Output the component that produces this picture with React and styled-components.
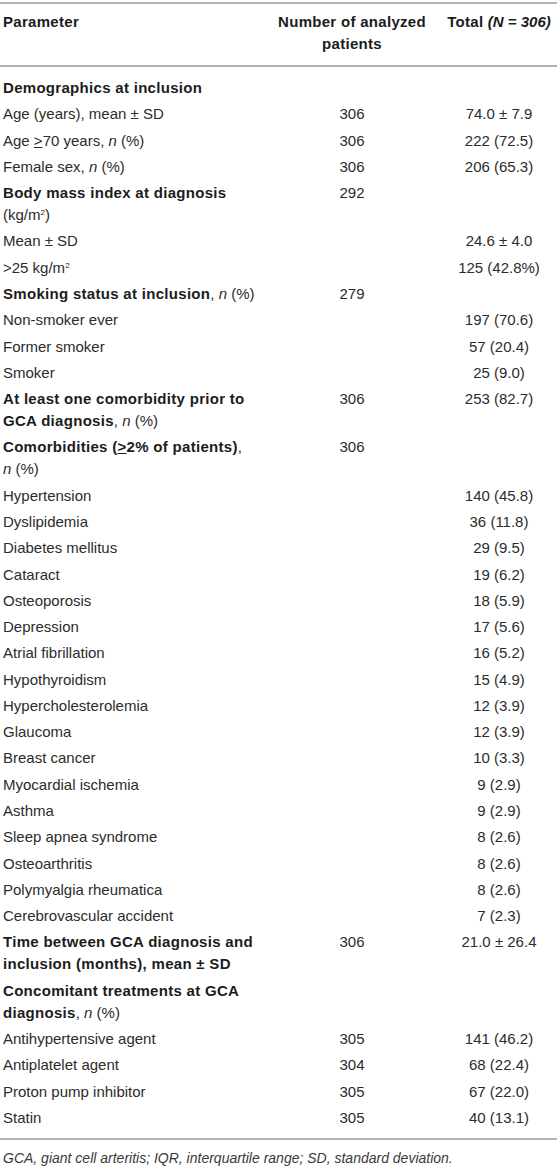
import styled, { createGlobalStyle } from 'styled-components'

const Global = createGlobalStyle`
  body {
    margin: 0;
    background: #fff;
    font-family: "Liberation Sans", Arial, sans-serif;
    color: #2c2c2c;
  }
`

const Page = styled.div`
  width: 557px;
  padding-top: 2px;
`

const Table = styled.table`
  width: 557px;
  border-collapse: collapse;
  table-layout: fixed;
  font-size: 15px;
  line-height: 22px;
`

const Head = styled.thead`
  border-top: 2px solid #b3b3b3;
  border-bottom: 2px solid #b3b3b3;
`

const HeadCell = styled.th`
  padding: 7px ${({ $right }) => $right ?? 3}px 10px ${({ $pad }) => $pad ?? 3}px;
  font-weight: bold;
  letter-spacing: 0.3px;
  color: #1c1c1c;
  vertical-align: top;
  white-space: nowrap;
  text-align: ${({ $align }) => $align || 'left'};
`

const Body = styled.tbody`
  border-bottom: 2px solid #b3b3b3;

  tr:first-child td {
    padding-top: 10px;
  }

  tr:last-child td {
    padding-bottom: 9.5px;
  }
`

const Cell = styled.td`
  padding: 2.15px ${({ $right }) => $right ?? 3}px 2.15px ${({ $pad }) => $pad ?? 3}px;
  vertical-align: top;
  text-align: ${({ $align }) => $align || 'left'};
  white-space: nowrap;
`

const Strong = styled.b`
  font-weight: bold;
  letter-spacing: 0.3px;
  color: #1c1c1c;
`

const Em = styled.i`
  font-style: italic;
  letter-spacing: 0;
`

const Ge = styled.span`
  text-decoration: underline;
  text-underline-offset: 1px;
`

const Sup = styled.sup`
  font-size: 8px;
  line-height: 0;
  vertical-align: 5px;
`

const Note = styled.p`
  margin: 9px 0 0;
  padding-left: 3px;
  font-size: 14px;
  line-height: 18px;
  font-style: italic;
  color: #3a3a3a;
`

const np = <>, <Em>n</Em> (%)</>

const rows = [
  { label: <Strong>Demographics at inclusion</Strong> },
  { label: <>Age (years), mean ± SD</>, n: '306', total: '74.0 ± 7.9' },
  { label: <>Age <Ge>&gt;</Ge>70 years{np}</>, n: '306', total: '222 (72.5)' },
  { label: <>Female sex{np}</>, n: '306', total: '206 (65.3)' },
  { label: <><Strong>Body mass index at diagnosis</Strong><br />(kg/m<Sup>2</Sup>)</>, n: '292' },
  { label: <>Mean ± SD</>, total: '24.6 ± 4.0' },
  { label: <>&gt;25 kg/m<Sup>2</Sup></>, total: '125 (42.8%)' },
  { label: <><Strong>Smoking status at inclusion</Strong>{np}</>, n: '279' },
  { label: 'Non-smoker ever', total: '197 (70.6)' },
  { label: 'Former smoker', total: '57 (20.4)' },
  { label: 'Smoker', total: '25 (9.0)' },
  { label: <><Strong>At least one comorbidity prior to</Strong><br /><Strong>GCA diagnosis</Strong>{np}</>, n: '306', total: '253 (82.7)' },
  { label: <><Strong>Comorbidities (<Ge>&gt;</Ge>2% of patients)</Strong>,<br /><Em>n</Em> (%)</>, n: '306' },
  { label: 'Hypertension', total: '140 (45.8)' },
  { label: 'Dyslipidemia', total: '36 (11.8)' },
  { label: 'Diabetes mellitus', total: '29 (9.5)' },
  { label: 'Cataract', total: '19 (6.2)' },
  { label: 'Osteoporosis', total: '18 (5.9)' },
  { label: 'Depression', total: '17 (5.6)' },
  { label: 'Atrial fibrillation', total: '16 (5.2)' },
  { label: 'Hypothyroidism', total: '15 (4.9)' },
  { label: 'Hypercholesterolemia', total: '12 (3.9)' },
  { label: 'Glaucoma', total: '12 (3.9)' },
  { label: 'Breast cancer', total: '10 (3.3)' },
  { label: 'Myocardial ischemia', total: '9 (2.9)' },
  { label: 'Asthma', total: '9 (2.9)' },
  { label: 'Sleep apnea syndrome', total: '8 (2.6)' },
  { label: 'Osteoarthritis', total: '8 (2.6)' },
  { label: 'Polymyalgia rheumatica', total: '8 (2.6)' },
  { label: 'Cerebrovascular accident', total: '7 (2.3)' },
  { label: <Strong>Time between GCA diagnosis and<br />inclusion (months), mean ± SD</Strong>, n: '306', total: '21.0 ± 26.4' },
  { label: <><Strong>Concomitant treatments at GCA</Strong><br /><Strong>diagnosis</Strong>{np}</> },
  { label: 'Antihypertensive agent', n: '305', total: '141 (46.2)' },
  { label: 'Antiplatelet agent', n: '304', total: '68 (22.4)' },
  { label: 'Proton pump inhibitor', n: '305', total: '67 (22.0)' },
  { label: 'Statin', n: '305', total: '40 (13.1)' },
]

export default function App() {
  return (
    <Page>
      <Global />
      <Table>
        <colgroup>
          <col style={{ width: 273 }} />
          <col style={{ width: 158 }} />
          <col style={{ width: 126 }} />
        </colgroup>
        <Head>
          <tr>
            <HeadCell>Parameter</HeadCell>
            <HeadCell $align="center">Number of analyzed<br />patients</HeadCell>
            <HeadCell $align="center" $pad={10} $right={0}>Total <Em>(N = 306)</Em></HeadCell>
          </tr>
        </Head>
        <Body>
          {rows.map((r, i) => (
            <tr key={i}>
              <Cell>{r.label}</Cell>
              <Cell $align="center">{r.n}</Cell>
              <Cell $align="center" $pad={10} $right={0}>{r.total}</Cell>
            </tr>
          ))}
        </Body>
      </Table>
      <Note>GCA, giant cell arteritis; IQR, interquartile range; SD, standard deviation.</Note>
    </Page>
  )
}
